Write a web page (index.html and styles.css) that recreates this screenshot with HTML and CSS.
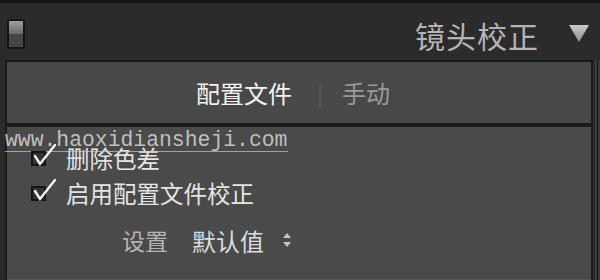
FILE: index.html
```html
<!DOCTYPE html>
<html lang="zh">
<head>
<meta charset="utf-8">
<link rel="stylesheet" href="styles.css">
</head>
<body>
<div class="frame">
  <div class="header">
    <div class="toggle"><span class="toggle-top"></span><span class="toggle-bottom"></span></div>
    <div class="title">镜头校正</div>
    <svg class="collapse" width="22" height="19" viewBox="0 0 22 19"><defs><linearGradient id="tg" x1="0" y1="0" x2="0" y2="1"><stop offset="0" stop-color="#c8c8c8"/><stop offset="1" stop-color="#8e8e8e"/></linearGradient></defs><polygon points="1,1 21,1 11,18" fill="url(#tg)"/></svg>
  </div>
  <div class="panel">
    <div class="tabs">
      <span class="tab active">配置文件</span>
      <span class="sep">|</span>
      <span class="tab">手动</span>
    </div>
    <div class="content">
      <div class="watermark">www.haoxidiansheji.com</div>
      <div class="row">
        <span class="checkbox"><svg class="tick" width="26" height="24" viewBox="0 0 26 24"><polyline points="3,13 8,21 23,2" fill="none" stroke="#f2f2f2" stroke-width="2.4" stroke-linejoin="miter" stroke-linecap="round"/></svg></span>
        <span class="label">删除色差</span>
      </div>
      <div class="row">
        <span class="checkbox"><svg class="tick" width="26" height="24" viewBox="0 0 26 24"><polyline points="3,13 8,21 23,2" fill="none" stroke="#f2f2f2" stroke-width="2.4" stroke-linejoin="miter" stroke-linecap="round"/></svg></span>
        <span class="label">启用配置文件校正</span>
      </div>
      <div class="setting">
        <span class="setting-name">设置</span>
        <span class="setting-value">默认值</span>
        <svg class="stepper" width="10" height="16" viewBox="0 0 10 16"><polygon points="5,1 9,6 1,6" fill="#c4c4c4"/><polygon points="1,10 9,10 5,15" fill="#c4c4c4"/></svg>
      </div>
    </div>
  </div>
</div>
</body>
</html>
```
FILE: styles.css
```css
html, body {
  margin: 0;
  padding: 0;
}
body {
  width: 600px;
  height: 280px;
  overflow: hidden;
  background: #2b2b2b;
  font-family: "Noto Sans CJK SC", "Noto Sans", sans-serif;
}
.frame {
  width: 600px;
  height: 280px;
  display: flex;
  flex-direction: column;
  background: linear-gradient(to right, #2b2b2b 0, #2b2b2b 595px, #3c3c3c 595px, #3c3c3c 597px, #151515 597px, #151515 598px, #3a3a3a 598px);
}
.header {
  height: 57px;
  border-top: 3px solid #151515;
  display: flex;
  align-items: center;
  padding-left: 7px;
  padding-right: 10px;
  box-sizing: content-box;
  width: 583px;
  background: #2b2b2b;
}
.toggle {
  width: 18px;
  height: 30px;
  box-sizing: border-box;
  border: 2px solid #141414;
  border-radius: 3px;
  display: flex;
  flex-direction: column;
  background: #444;
  margin-top: 4px;
}
.toggle-top {
  height: 13px;
  background: linear-gradient(#a0a0a0, #6a6a6a);
  border-radius: 1px;
}
.toggle-bottom {
  flex: 1;
  background: #464646;
}
.title {
  margin-left: auto;
  font-size: 30px;
  line-height: 40px;
  color: #b4b4b4;
  letter-spacing: 1px;
  margin-top: 6px;
}
.collapse {
  margin-left: 29px;
  margin-top: 3px;
}
.panel {
  margin-left: 5px;
  width: 588px;
  flex: 1;
  display: flex;
  flex-direction: column;
  background: #1c1c1c;
}
.tabs {
  height: 61px;
  border: 2px solid #1a1a1a;
  background: #484848;
  display: flex;
  align-items: center;
  padding-left: 189px;
  font-size: 24px;
}
.tab {
  color: #9a9a9a;
  line-height: 30px;
}
.tab.active {
  color: #f2f2f2;
}
.sep {
  color: #5c5c5c;
  font-size: 22px;
  margin: 0 19px 0 25px;
}
.content {
  position: relative;
  flex: 1;
  margin: 2px 2px 0 2px;
  background: #4a4a4a;
  border-bottom: 1px solid #555;
  padding-top: 13px;
  padding-left: 24px;
}
.watermark {
  position: absolute;
  left: -2px;
  top: 0px;
  width: 283px;
  font-family: "Liberation Mono", monospace;
  font-size: 21.4px;
  line-height: 22px;
  color: rgba(215, 215, 215, 0.85);
  border-bottom: 1px solid rgba(200, 200, 200, 0.7);
  padding-top: 2px;
}
.row {
  height: 35px;
  display: flex;
  align-items: center;
}
.checkbox {
  position: relative;
  width: 15px;
  height: 15px;
  box-sizing: border-box;
  border: 2px solid #141414;
  background: #333;
  margin-top: 2px;
}
.tick {
  position: absolute;
  left: -1px;
  top: -10px;
}
.label {
  margin-left: 20px;
  font-size: 23.5px;
  line-height: 30px;
  color: #e4e4e4;
}
.setting {
  margin-top: 12px;
  height: 36px;
  display: flex;
  align-items: center;
  padding-left: 91px;
  font-size: 23px;
}
.setting-name {
  color: #b4b4b4;
}
.setting-value {
  color: #dcdcdc;
  margin-left: 24px;
  font-size: 24px;
}
.stepper {
  margin-left: 18px;
}
```
